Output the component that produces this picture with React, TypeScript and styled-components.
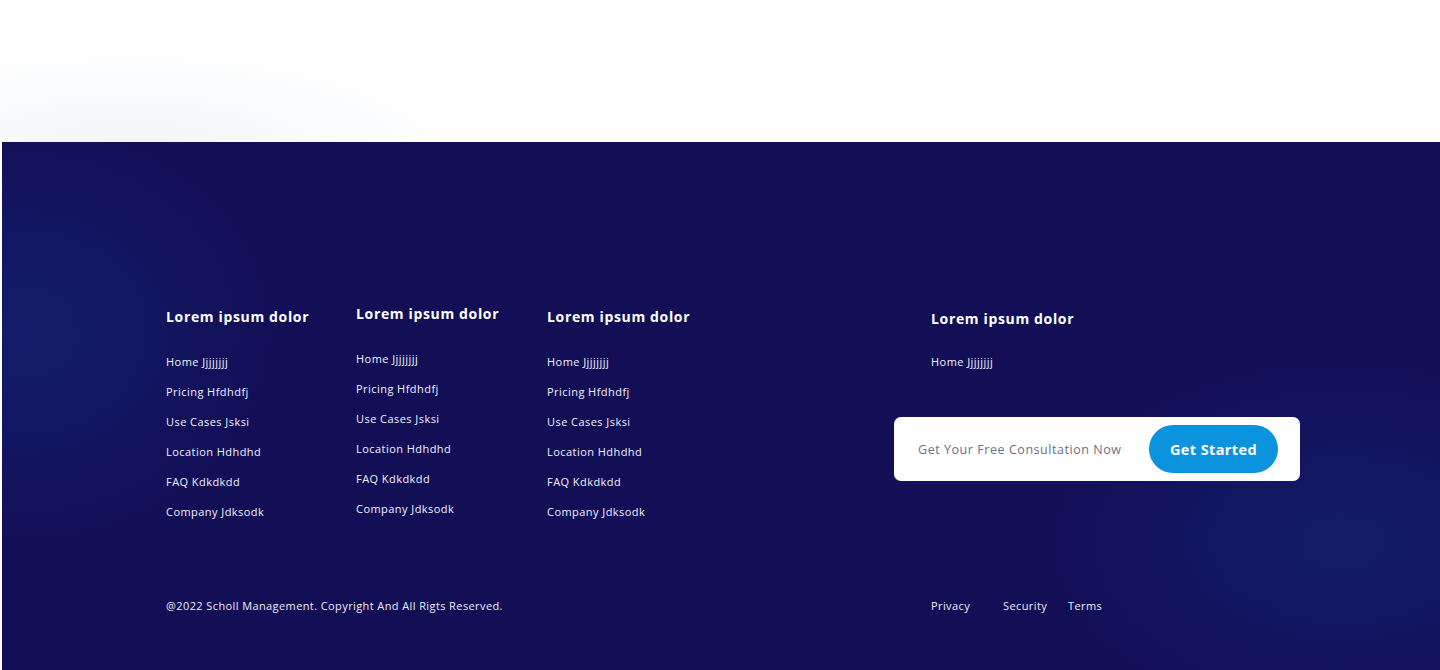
import React from "react";
import styled, { createGlobalStyle } from "styled-components";

const Global = createGlobalStyle`
  html, body { margin: 0; padding: 0; background: #ffffff; }
  body { font-family: "Open Sans", "Noto Sans", sans-serif; }
  * { box-sizing: border-box; }
`;

const Page = styled.div`
  width: 1440px;
  height: 670px;
  overflow: hidden;
  background: #ffffff;
`;

const Hero = styled.div`
  height: 142px;
  background:
    radial-gradient(ellipse 460px 140px at 130px 150px, rgba(228, 234, 246, 0.5), rgba(255,255,255,0) 75%),
    #ffffff;
`;

const Footer = styled.footer`
  margin-left: 2px;
  height: 528px;
  padding: 165px 0 0 164px;
  color: #ffffff;
  background:
    radial-gradient(ellipse 360px 300px at 20px 190px, rgba(20, 40, 120, 0.55), rgba(18, 15, 87, 0) 70%),
    radial-gradient(ellipse 420px 260px at 1340px 400px, rgba(20, 40, 120, 0.5), rgba(18, 15, 87, 0) 70%),
    #120f57;
`;

const Columns = styled.div`
  display: grid;
  grid-template-columns: 190px 191px 347px 406px;
  height: 256px;
`;

const Column = styled.div<{ $shift: number; $indent?: number }>`
  display: flex;
  flex-direction: column;
  margin-top: ${(p) => p.$shift}px;
  padding-left: ${(p) => p.$indent ?? 0}px;
`;

const Heading = styled.h4<{ $gap?: number }>`
  margin: 0 0 ${(p) => p.$gap ?? 27}px;
  font-size: 14px;
  font-weight: 700;
  line-height: 20px;
  letter-spacing: 0.65px;
  white-space: nowrap;
`;

const LinkList = styled.ul`
  list-style: none;
  margin: 0;
  padding: 0;
  display: flex;
  flex-direction: column;
  gap: 14px;
`;

const LinkItem = styled.li`
  font-size: 11px;
  line-height: 16px;
  color: #f1f1f8;
  letter-spacing: 0.45px;
  white-space: nowrap;
`;

const CtaWrap = styled.div`
  margin: 47px 0 0 -37px;
  width: 406px;
  height: 64px;
  background: #ffffff;
  border-radius: 7px;
  display: flex;
  align-items: center;
  justify-content: space-between;
  padding: 0 22px 0 24px;
`;

const CtaText = styled.span`
  font-size: 12.5px;
  color: #6b7087;
  letter-spacing: 0.55px;
`;

const CtaButton = styled.button`
  width: 129px;
  height: 48px;
  border: none;
  border-radius: 24px;
  background: #0b94dd;
  color: #ffffff;
  font-family: inherit;
  font-size: 14.5px;
  font-weight: 700;
  letter-spacing: 0.4px;
  cursor: pointer;
`;

const Bottom = styled.div`
  display: grid;
  grid-template-columns: 765px auto;
  margin-top: 35px;
  font-size: 11px;
  line-height: 16px;
  color: #ecebf5;
  letter-spacing: 0.4px;
`;

const Legal = styled.div`
  display: flex;
`;

const LegalLink = styled.span<{ $w: number }>`
  width: ${(p) => p.$w}px;
`;

const links = [
  "Home Jjjjjjjj",
  "Pricing Hfdhdfj",
  "Use Cases Jsksi",
  "Location Hdhdhd",
  "FAQ Kdkdkdd",
  "Company Jdksodk",
];

export default function App() {
  return (
    <Page>
      <Global />
      <Hero />
      <Footer>
        <Columns>
          {[0, -3, 0].map((s, i) => (
            <Column key={i} $shift={s}>
              <Heading>Lorem ipsum dolor</Heading>
              <LinkList>
                {links.map((l) => (
                  <LinkItem key={l}>{l}</LinkItem>
                ))}
              </LinkList>
            </Column>
          ))}
          <Column $shift={2} $indent={37}>
            <Heading $gap={25}>Lorem ipsum dolor</Heading>
            <LinkList>
              <LinkItem>Home Jjjjjjjj</LinkItem>
            </LinkList>
            <CtaWrap>
              <CtaText>Get Your Free Consultation Now</CtaText>
              <CtaButton>Get Started</CtaButton>
            </CtaWrap>
          </Column>
        </Columns>
        <Bottom>
          <span>@2022 Scholl Management. Copyright And All Rigts Reserved.</span>
          <Legal>
            <LegalLink $w={72}>Privacy</LegalLink>
            <LegalLink $w={65}>Security</LegalLink>
            <LegalLink $w={40}>Terms</LegalLink>
          </Legal>
        </Bottom>
      </Footer>
    </Page>
  );
}
